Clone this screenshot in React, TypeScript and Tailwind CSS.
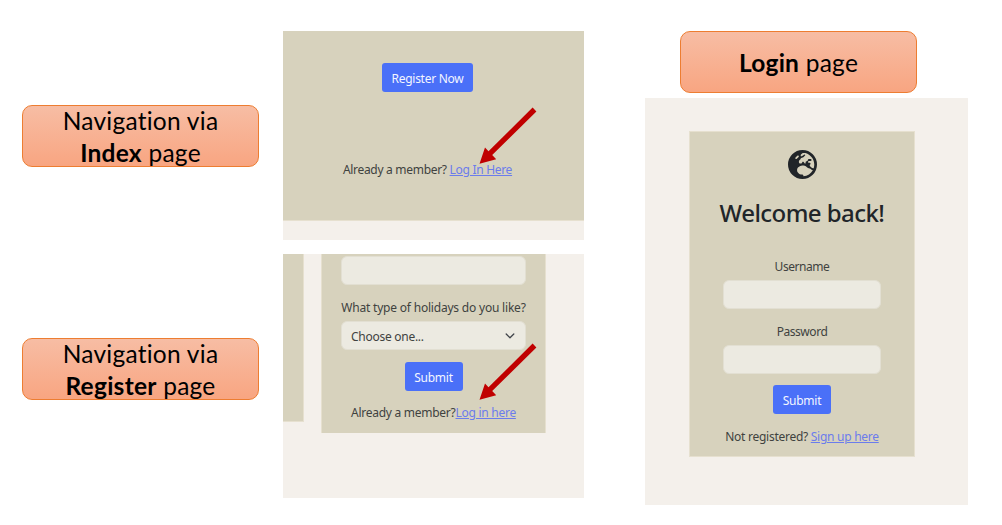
import type { ReactNode } from "react";
import { FaEarthEurope } from "react-icons/fa6";

function Label({ className, children }: { className: string; children: ReactNode }) {
  return (
    <div
      className={`flex h-[62px] w-[237px] flex-none items-center justify-center rounded-[10px] border border-[#ed7d31] bg-linear-to-b from-[#f7bda4] to-[#f8a581] pt-px text-center font-['Lato','Carlito',sans-serif] text-[24.5px] leading-[32px] tracking-[0.25px] text-black ${className}`}
    >
      <div className="flex-none">{children}</div>
    </div>
  );
}

function Button({ className, children }: { className: string; children: ReactNode }) {
  return (
    <button type="button" className={`flex h-[29px] flex-none items-center justify-center rounded-[3px] bg-[#4a70f8] pt-[2px] text-[#f4f6ff] ${className}`}>
      {children}
    </button>
  );
}

function TextLink({ children }: { children: ReactNode }) {
  return (
    <a href="#" className="text-[#6b7cec] underline decoration-1 underline-offset-1">
      {children}
    </a>
  );
}

function Arrow({ className }: { className: string }) {
  return (
    <svg className={`absolute h-[58px] w-[60px] ${className}`} viewBox="0 0 60 58" fill="#c00000">
      <path d="M54.6 0.6 L58.4 4.4 L14.2 48.1 L18.2 52.2 L1.5 56.8 L7 40.4 L10.5 44.3 Z" />
    </svg>
  );
}

export default function App() {
  return (
    <div className="flex h-[525px] w-[1002px] overflow-hidden bg-white font-['Noto_Sans','Segoe_UI',sans-serif] text-[12px] leading-[20px] tracking-[-0.27px] text-[#40423f]">
      <div className="flex w-[283px] flex-none flex-col pl-[22px]">
        <Label className="mt-[105px]">
          Navigation via
          <br />
          <b>Index</b> page
        </Label>
        <Label className="mt-[171px]">
          Navigation via
          <br />
          <b>Register</b> page
        </Label>
      </div>

      <div className="flex w-[301px] flex-none flex-col pt-[31px]">
        <section className="relative h-[209px] flex-none bg-[#f4f0eb]">
          <div className="flex h-[190px] flex-col items-center border-b border-[#e6e0cf] bg-[#d7d2bd] pt-[32px]">
            <Button className="mr-[12px] w-[91px]">Register Now</Button>
            <p className="mt-[68px] mr-[12px] tracking-[-0.3px]">
              Already a member? <TextLink>Log In Here</TextLink>
            </p>
          </div>
          <Arrow className="top-[76px] left-[194.5px]" />
        </section>

        <section className="relative mt-[14px] flex h-[244px] flex-none items-start bg-[#f4f0eb]">
          <div className="h-[168px] w-[21px] border-r border-b border-[#e6e0cf] bg-[#d7d2bd]" />
          <form className="ml-[17px] flex h-[179px] w-[225px] flex-col items-center border-x border-[#e6e0cf] bg-[#d7d2bd] pt-[2px]">
            <div className="h-[29px] w-[185px] flex-none rounded-[6px] border border-[#e2dfd2] bg-[#eceae1]" />
            <label className="mt-[13px] tracking-[-0.2px] whitespace-nowrap">What type of holidays do you like?</label>
            <div className="mt-[3px] flex h-[29px] w-[185px] flex-none items-center justify-between rounded-[6px] border border-[#e2dfd2] bg-[#eceae1] pr-[10px] pl-[9px]">
              <span className="pt-[2px]">Choose one...</span>
              <svg className="h-[10px] w-[10px]" viewBox="0 0 10 10" fill="none" stroke="#40444a" strokeWidth="1.3" strokeLinecap="round" strokeLinejoin="round">
                <path d="M1.2 3 L5 6.8 L8.8 3" />
              </svg>
            </div>
            <Button className="mt-[12px] w-[58px]">Submit</Button>
            <p className="mt-[12px] whitespace-nowrap">
              Already a member?
              <TextLink>Log in here</TextLink>
            </p>
          </form>
          <Arrow className="top-[89px] left-[194.5px]" />
        </section>
      </div>

      <div className="ml-[61px] flex w-[323px] flex-none flex-col pt-[31px]">
        <Label className="ml-[35px]">
          <b>Login</b> page
        </Label>
        <section className="mt-[5px] h-[407px] flex-none bg-[#f4f0eb] pt-[33px] pl-[44px]">
          <form className="flex h-[326px] w-[226px] flex-col items-center border border-[#e6e0cf] bg-[#d7d2bd] pt-[18px]">
            <FaEarthEurope className="h-[29px] w-[29px] flex-none text-[#212529]" />
            <h1 className="mt-[18px] text-[24px] leading-[32px] font-medium tracking-[-0.55px] whitespace-nowrap text-[#212529]">Welcome back!</h1>
            <label className="mt-[28px] tracking-[-0.45px]">Username</label>
            <div className="mt-[3px] h-[29px] w-[158px] flex-none rounded-[6px] border border-[#e2dfd2] bg-[#eceae1]" />
            <label className="mt-[13px] tracking-[-0.45px]">Password</label>
            <div className="mt-[3px] h-[29px] w-[158px] flex-none rounded-[6px] border border-[#e2dfd2] bg-[#eceae1]" />
            <Button className="mt-[11px] w-[58px]">Submit</Button>
            <p className="mt-[13px] whitespace-nowrap">
              Not registered? <TextLink>Sign up here</TextLink>
            </p>
          </form>
        </section>
      </div>
    </div>
  );
}
